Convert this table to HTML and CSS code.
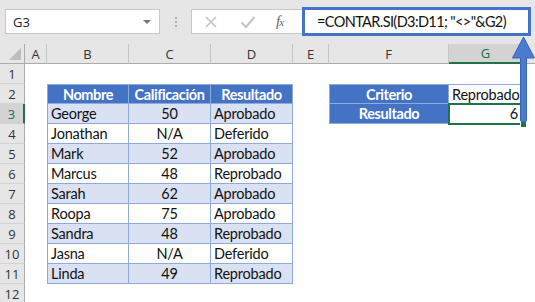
FILE: index.html
```html
<!DOCTYPE html>
<html lang="es">
<head>
<meta charset="utf-8">
<title>CONTAR.SI</title>
<link rel="stylesheet" href="styles.css">
</head>
<body>
<div class="app">
  <div class="formula-bar">
    <div class="name-box">
      <span class="name-ref">G3</span>
      <span class="name-caret"></span>
    </div>
    <div class="grip"><i></i><i></i><i></i></div>
    <div class="fn-box">
      <svg class="fn-icon" width="14" height="14" viewBox="0 0 14 14"><path d="M2 2 L12 12 M12 2 L2 12" stroke="#c4c4c4" stroke-width="1.6" fill="none"/></svg>
      <svg class="fn-icon" width="16" height="14" viewBox="0 0 16 14"><path d="M1.5 7.5 L6 12 L14.5 2" stroke="#c4c4c4" stroke-width="2" fill="none"/></svg>
      <span class="fx"><i>f</i><i class="fx-x">x</i></span>
    </div>
    <div class="formula">=CONTAR.SI(D3:D11; "&lt;&gt;"&amp;G2)</div>
  </div>

  <div class="sheet">
    <!-- column headers -->
    <div class="corner"><span class="corner-tri"></span></div>
    <div class="ch">A</div>
    <div class="ch">B</div>
    <div class="ch">C</div>
    <div class="ch">D</div>
    <div class="ch">E</div>
    <div class="ch">F</div>
    <div class="ch ch-active">G</div>
    <div class="ch ch-last"></div>

    <!-- row 1 -->
    <div class="rh">1</div>
    <div class="c"></div><div class="c"></div><div class="c"></div><div class="c"></div><div class="c"></div><div class="c"></div><div class="c"></div><div class="c"></div>

    <!-- row 2 -->
    <div class="rh">2</div>
    <div class="c"></div>
    <div class="c t-head t-first">Nombre</div>
    <div class="c t-head">Calificación</div>
    <div class="c t-head">Resultado</div>
    <div class="c"></div>
    <div class="c t-head t-first">Criterio</div>
    <div class="c t-val t-top">Reprobado</div>
    <div class="c"></div>

    <!-- row 3 -->
    <div class="rh rh-active">3</div>
    <div class="c"></div>
    <div class="c t-cell t-first band">George</div>
    <div class="c t-cell num band">50</div>
    <div class="c t-cell band">Aprobado</div>
    <div class="c"></div>
    <div class="c t-head t-first t-hb">Resultado</div>
    <div class="c t-val t-res">6</div>
    <div class="c"></div>

    <!-- row 4 -->
    <div class="rh">4</div>
    <div class="c"></div>
    <div class="c t-cell t-first">Jonathan</div>
    <div class="c t-cell num">N/A</div>
    <div class="c t-cell">Deferido</div>
    <div class="c"></div><div class="c"></div><div class="c"></div><div class="c"></div>

    <!-- row 5 -->
    <div class="rh">5</div>
    <div class="c"></div>
    <div class="c t-cell t-first band">Mark</div>
    <div class="c t-cell num band">52</div>
    <div class="c t-cell band">Aprobado</div>
    <div class="c"></div><div class="c"></div><div class="c"></div><div class="c"></div>

    <!-- row 6 -->
    <div class="rh">6</div>
    <div class="c"></div>
    <div class="c t-cell t-first">Marcus</div>
    <div class="c t-cell num">48</div>
    <div class="c t-cell">Reprobado</div>
    <div class="c"></div><div class="c"></div><div class="c"></div><div class="c"></div>

    <!-- row 7 -->
    <div class="rh">7</div>
    <div class="c"></div>
    <div class="c t-cell t-first band">Sarah</div>
    <div class="c t-cell num band">62</div>
    <div class="c t-cell band">Aprobado</div>
    <div class="c"></div><div class="c"></div><div class="c"></div><div class="c"></div>

    <!-- row 8 -->
    <div class="rh">8</div>
    <div class="c"></div>
    <div class="c t-cell t-first">Roopa</div>
    <div class="c t-cell num">75</div>
    <div class="c t-cell">Aprobado</div>
    <div class="c"></div><div class="c"></div><div class="c"></div><div class="c"></div>

    <!-- row 9 -->
    <div class="rh">9</div>
    <div class="c"></div>
    <div class="c t-cell t-first band">Sandra</div>
    <div class="c t-cell num band">48</div>
    <div class="c t-cell band">Reprobado</div>
    <div class="c"></div><div class="c"></div><div class="c"></div><div class="c"></div>

    <!-- row 10 -->
    <div class="rh">10</div>
    <div class="c"></div>
    <div class="c t-cell t-first">Jasna</div>
    <div class="c t-cell num">N/A</div>
    <div class="c t-cell">Deferido</div>
    <div class="c"></div><div class="c"></div><div class="c"></div><div class="c"></div>

    <!-- row 11 -->
    <div class="rh">11</div>
    <div class="c"></div>
    <div class="c t-cell t-first band">Linda</div>
    <div class="c t-cell num band">49</div>
    <div class="c t-cell band">Reprobado</div>
    <div class="c"></div><div class="c"></div><div class="c"></div><div class="c"></div>

    <!-- row 12 -->
    <div class="rh">12</div>
    <div class="c"></div><div class="c"></div><div class="c"></div><div class="c"></div><div class="c"></div><div class="c"></div><div class="c"></div><div class="c"></div>

    <!-- active cell outline and fill handle -->
    <div class="selection"></div>
    <div class="fill-handle"></div>
  </div>

  <!-- callout arrow pointing from the result cell up to the formula -->
  <svg class="callout" width="26" height="88" viewBox="0 0 26 88">
    <path d="M13.5 1 L24.5 22 L16.5 22 L16.5 84 Q16.5 86 14.5 86 L12.5 86 Q10.5 86 10.5 84 L10.5 22 L2.5 22 Z" fill="#4a7bcf" stroke="#3a65b3" stroke-width="1"/>
  </svg>
</div>
</body>
</html>
```

FILE: styles.css
```css
* { box-sizing: border-box; }

html, body {
  margin: 0;
  padding: 0;
  background: #ffffff;
}

.app {
  position: relative;
  width: 535px;
  height: 302px;
  overflow: hidden;
  background: #e6e6e6;
  font-family: "Lato", "Liberation Sans", sans-serif;
}

/* ---------- formula bar ---------- */
.formula-bar {
  height: 44px;
  display: flex;
  align-items: flex-start;
  padding-top: 9px;
  padding-left: 5px;
}

.name-box {
  flex: 0 0 155px;
  height: 25px;
  background: #fff;
  border: 1px solid #c8c8c8;
  display: flex;
  align-items: center;
  justify-content: space-between;
  padding: 0 8px 0 7px;
  font-family: "Open Sans", "Liberation Sans", sans-serif;
  font-size: 13px;
  color: #222;
}

.name-caret {
  width: 0;
  height: 0;
  border-left: 4px solid transparent;
  border-right: 4px solid transparent;
  border-top: 4px solid #777;
}

.grip {
  flex: 0 0 31px;
  height: 25px;
  display: flex;
  flex-direction: column;
  align-items: center;
  justify-content: center;
  gap: 2px;
}
.grip i {
  width: 2px;
  height: 2px;
  background: #b0b0b0;
}

.fn-box {
  flex: 0 0 111px;
  height: 25px;
  background: #fff;
  border: 1px solid #c8c8c8;
  border-right: none;
  display: flex;
  align-items: center;
  padding-left: 12px;
  gap: 22px;
}

.fx {
  font-family: "Liberation Serif", serif;
  font-style: italic;
  font-size: 15px;
  color: #666;
  margin-left: -2px;
  letter-spacing: -1px;
}
.fx-x { font-size: 11px; }

.formula {
  flex: 0 0 229px;
  height: 29px;
  margin-top: -2px;
  border: 3px solid #4472c4;
  background: #fff;
  padding-left: 12px;
  display: flex;
  align-items: center;
  white-space: nowrap;
  font-family: "Lato", "Liberation Sans", sans-serif;
  font-size: 14.5px;
  letter-spacing: -0.6px;
  color: #111;
}

/* ---------- grid ---------- */
.sheet {
  position: relative;
  display: grid;
  grid-template-columns: 25px 22px 82px 82px 82px 36px 120px 74px 12px;
  grid-template-rows: 20px repeat(12, 20px);
  background: #fff;
}

.corner {
  background: #e6e6e6;
  border-right: 1px solid #ababab;
  border-bottom: 1px solid #ababab;
  position: relative;
}
.corner-tri {
  position: absolute;
  right: 3px;
  bottom: 3px;
  width: 0;
  height: 0;
  border-left: 12px solid transparent;
  border-bottom: 12px solid #bcbcbc;
}

.ch {
  background: #e6e6e6;
  border-right: 1px solid #c6c6c6;
  border-bottom: 1px solid #ababab;
  display: flex;
  align-items: center;
  justify-content: center;
  font-family: "Open Sans", "Liberation Sans", sans-serif;
  font-size: 13px;
  color: #333;
}
.ch-active {
  background: #d3d3d3;
  color: #1e6b3f;
  border-bottom: 2px solid #217346;
}
.ch-last { border-right: none; }

.rh {
  background: #e6e6e6;
  border-right: 1px solid #ababab;
  border-bottom: 1px solid #d2d2d2;
  display: flex;
  align-items: center;
  justify-content: center;
  font-family: "Open Sans", "Liberation Sans", sans-serif;
  font-size: 13px;
  color: #333;
}
.rh-active {
  background: #d3d3d3;
  color: #1e6b3f;
  border-right: 2px solid #217346;
}

.c {
  background: #fff;
  font-size: 14.5px;
  letter-spacing: -0.2px;
  color: #111;
  display: flex;
  align-items: center;
  white-space: nowrap;
  overflow: visible;
}

/* table styling */
.t-head {
  background: #4472c4;
  color: #fff;
  font-weight: 700;
  letter-spacing: -0.4px;
  justify-content: center;
  border-right: 1px solid #8eaadb;
  border-top: 1px solid #8eaadb;
  border-bottom: 1px solid #8eaadb;
}
.t-hb { border-top: none; }
.t-first { border-left: 1px solid #8eaadb; }

.t-cell {
  padding-left: 3px;
  border-right: 1px solid #8eaadb;
  border-bottom: 1px solid #8eaadb;
}
.t-cell.band { background: #d9e1f2; }
.t-cell.num {
  justify-content: center;
  padding-left: 0;
}

.t-val {
  padding-left: 3px;
  border-right: 1px solid #8eaadb;
  border-bottom: 1px solid #8eaadb;
}
.t-top { border-top: 1px solid #8eaadb; }
.t-res {
  justify-content: flex-end;
  padding-right: 4px;
}

/* active cell G3 */
.selection {
  position: absolute;
  left: 448px;
  top: 59px;
  width: 76px;
  height: 22px;
  border: 2px solid #217346;
  pointer-events: none;
}
.fill-handle {
  position: absolute;
  left: 520px;
  top: 77px;
  width: 7px;
  height: 7px;
  background: #217346;
  border: 1px solid #fff;
}

.callout {
  position: absolute;
  left: 510px;
  top: 36px;
}
```
